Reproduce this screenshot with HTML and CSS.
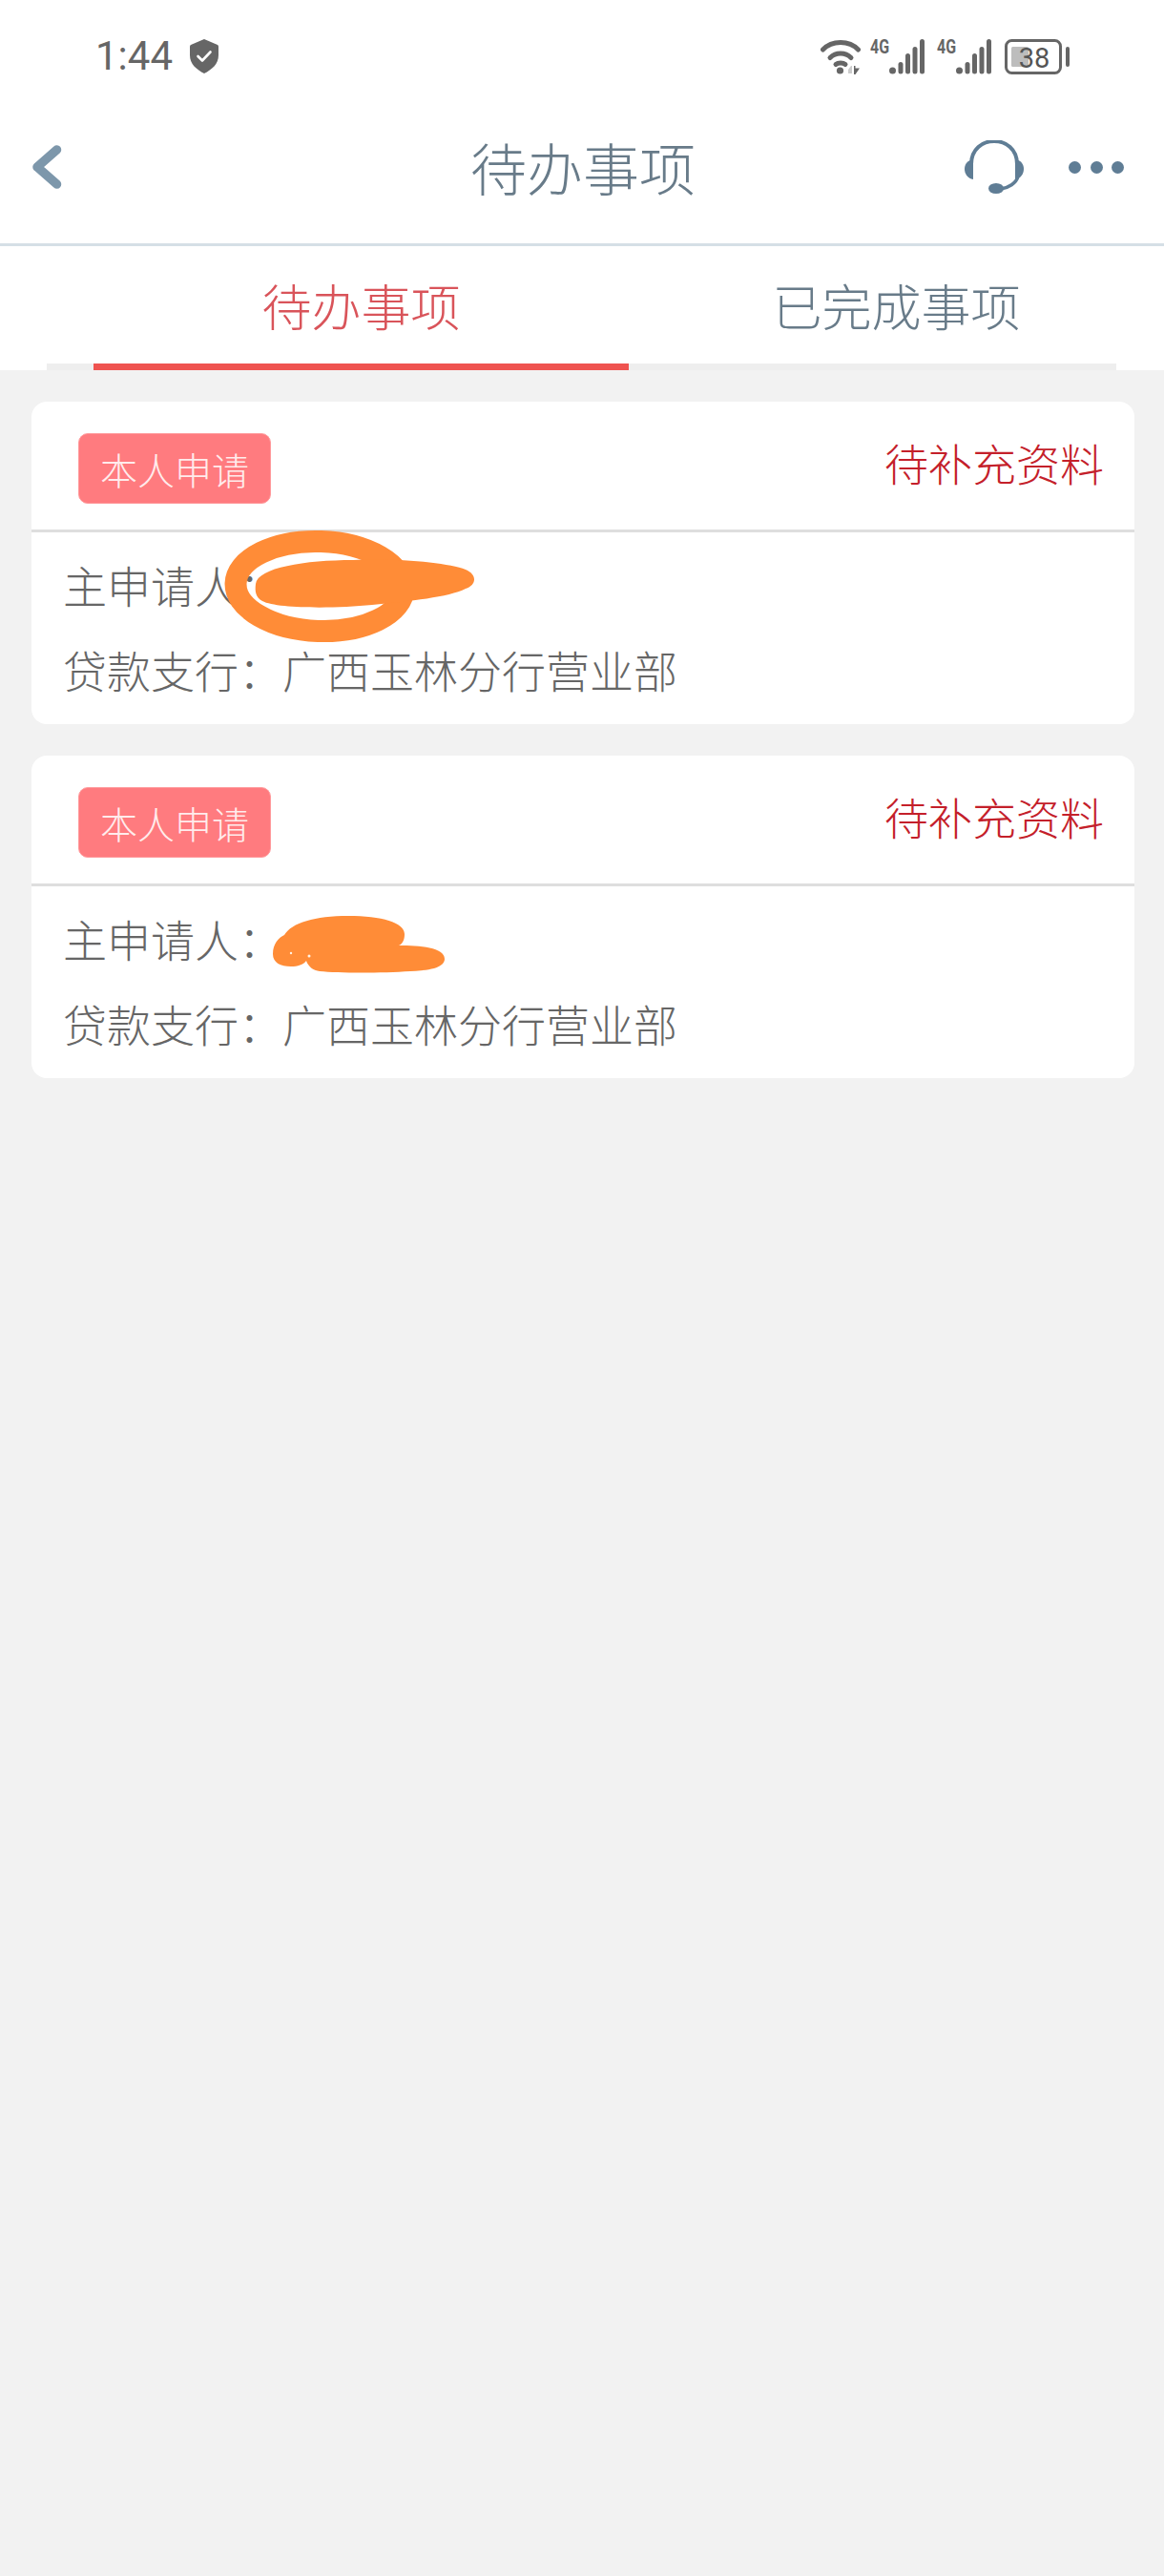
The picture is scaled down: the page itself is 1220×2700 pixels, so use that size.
FILE: index.html
```html
<!DOCTYPE html>
<html lang="zh-CN">
<head>
<meta charset="utf-8">
<title>待办事项</title>
<link rel="stylesheet" href="styles.css">
</head>
<body>
<div class="app">
  <header class="top">
    <div class="status">
      <span class="time">1:44</span>
      <svg class="shield" viewBox="0 0 30 36" width="30" height="36">
        <path fill="#666" d="M15 0 L29 6 Q30 6.500 30 8 L30 17 C30 26 23 32 15 36 C7 32 0 26 0 17 L0 8 Q0 6.500 1 6 Z"/>
        <path fill="none" stroke="#fff" stroke-width="2.600" stroke-linecap="round" stroke-linejoin="round" d="M8.500 18 L13 22.500 L21.500 13.500"/>
      </svg>
      <div class="sys">
        <svg class="wifi" viewBox="0 0 42 37" width="42" height="37">
          <g fill="none" stroke="#666" stroke-width="5" stroke-linecap="round">
            <path d="M2.500 11 C12 1 30 1 39.500 11"/>
            <path d="M10 19.500 C16 13.500 26 13.500 32 19.500"/>
            <path d="M16 26.500 C18.500 24.500 23.500 24.500 26 26.500"/>
          </g>
          <circle cx="20.500" cy="33" r="3.600" fill="#666"/>
          <path fill="#ccc" d="M29 36 L29 32 L32 28 L33 28 L33 36Z"/>
          <path fill="#666" d="M35 28 L36.500 28 L36.500 30.500 L41 30.500 L36.500 37 L35 37Z"/>
        </svg>
        <svg class="sig" viewBox="0 -8 58 45" width="58" height="45">
          <text class="net" x="0" y="15" textLength="20" lengthAdjust="spacingAndGlyphs">4G</text>
          <g fill="#666">
            <circle cx="23.500" cy="33" r="3.500"/>
            <rect x="29.500" y="24" width="5" height="12.500" rx="2.500"/>
            <rect x="37" y="15" width="5" height="21.500" rx="2.500"/>
            <rect x="44.500" y="8" width="5" height="28.500" rx="2.500"/>
            <rect x="52" y="0" width="5" height="36.500" rx="2.500"/>
          </g>
        </svg>
        <svg class="sig" viewBox="0 -8 58 45" width="58" height="45">
          <text class="net" x="0" y="15" textLength="20" lengthAdjust="spacingAndGlyphs">4G</text>
          <g fill="#666">
            <circle cx="23.500" cy="33" r="3.500"/>
            <rect x="29.500" y="24" width="5" height="12.500" rx="2.500"/>
            <rect x="37" y="15" width="5" height="21.500" rx="2.500"/>
            <rect x="44.500" y="8" width="5" height="28.500" rx="2.500"/>
            <rect x="52" y="0" width="5" height="36.500" rx="2.500"/>
          </g>
        </svg>
        <svg class="batt" viewBox="0 0 68 37" width="68" height="37">
          <rect x="1.500" y="1.500" width="57" height="34" rx="6" fill="none" stroke="#666" stroke-width="3"/>
          <rect x="7" y="8" width="18" height="21" rx="1.500" fill="#bdbdbd"/>
          <text class="pct" x="31" y="29.500" text-anchor="middle">38</text>
          <rect x="64" y="8" width="4" height="21" rx="2" fill="#666"/>
        </svg>
      </div>
    </div>
    <nav class="nav">
      <svg class="back" viewBox="0 0 32 46" width="32" height="46">
        <path fill="none" stroke="#7d97ab" stroke-width="9.500" stroke-linecap="round" stroke-linejoin="round" d="M26.500 5 L6 23 L26.500 41"/>
      </svg>
      <h1 class="title">待办事项</h1>
      <svg class="headset" viewBox="0 0 62 56" width="62" height="56">
        <path fill="none" stroke="#5f7d95" stroke-width="4" d="M7 25 C7 -7 55 -7 55 25"/>
        <path fill="none" stroke="#5f7d95" stroke-width="3.500" d="M56 38 C54 45 46 50 38 51"/>
        <path fill="#5f7d95" d="M9 20 L9 41 C3 40 0 35 0 30 C0 25 3 21 9 20Z"/>
        <path fill="#5f7d95" d="M53 20 L53 41 C59 40 62 35 62 30 C62 25 59 21 53 20Z"/>
        <ellipse cx="33" cy="50.500" rx="8" ry="5.500" fill="#5f7d95"/>
      </svg>
      <div class="more"><i class="dot"></i><i class="dot"></i><i class="dot"></i></div>
    </nav>
  </header>

  <section class="tabs">
    <div class="tab-row">
      <div class="tab tab-on">待办事项</div>
      <div class="tab">已完成事项</div>
    </div>
    <div class="track"><div class="ink"></div></div>
  </section>

  <main class="list">
    <article class="card">
      <div class="card-head">
        <span class="tag">本人申请</span>
        <span class="state">待补充资料</span>
      </div>
      <div class="card-body">
        <p class="row">主申请人：</p>
        <p class="row">贷款支行：广西玉林分行营业部</p>
      </div>
      <svg class="scrawl scrawl-a" viewBox="0 0 280 130" width="280" height="130">
        <ellipse cx="105" cy="64.500" rx="88" ry="47" transform="rotate(2 105 64.500)" fill="none" stroke="#ff8c37" stroke-width="23"/>
        <path fill="#ff8c37" d="M38 62 C40 45 90 37 140 37 C190 35 240 40 258 47 C270 52 270 63 258 67 C240 76 200 80 160 84 C120 88 60 88 45 80 C38 76 37 70 38 62Z"/>
      </svg>
    </article>

    <article class="card">
      <div class="card-head">
        <span class="tag">本人申请</span>
        <span class="state">待补充资料</span>
      </div>
      <div class="card-body">
        <p class="row">主申请人：</p>
        <p class="row">贷款支行：广西玉林分行营业部</p>
      </div>
      <svg class="scrawl scrawl-b" viewBox="0 0 192 70" width="192" height="70">
        <path fill="#ff8c37" d="M6 45 C6 34 12 28 18 25 C26 12 50 5 85 5 C120 5 144 12 144 24 C144 30 142 34 138 36 C160 36 186 38 186 50 C186 58 175 62 150 63 C120 65 75 65 55 63 C48 62 43 58 41 52 C38 56 32 58 25 58 C14 58 6 54 6 45Z"/>
        <circle class="speck" cx="25" cy="44" r="1.200"/>
        <circle class="speck" cx="44" cy="47" r="1.500"/>
      </svg>
    </article>
  </main>
</div>
</body>
</html>
```
FILE: styles.css
```css
* { box-sizing: border-box; }
html, body { margin: 0; padding: 0; }
body {
  background: #f2f2f2;
  font-family: "Noto Sans CJK SC", "Noto Sans", sans-serif;
  font-weight: 300;
}
.app { width: 1220px; min-height: 2700px; background: #f2f2f2; }

.top { background: #fff; border-bottom: 3px solid #d5dfe6; height: 258px; }

.status {
  height: 116px;
  display: flex;
  align-items: center;
  padding: 2px 99px 0 100px;
}
.time {
  font-family: Roboto, "Liberation Sans", sans-serif;
  font-size: 42px;
  font-weight: 400;
  line-height: 48px;
  color: #666;
}
.shield { margin-left: 18px; display: block; }
.sys { margin-left: auto; display: flex; align-items: flex-end; padding-bottom: 7px; }
.wifi { display: block; }
.sig { display: block; margin-left: 10px; }
.sig + .sig { margin-left: 12px; }
.batt { display: block; margin-left: 13px; }
.net {
  font-family: Roboto, "Liberation Sans", sans-serif;
  font-size: 20px;
  font-weight: 700;
  fill: #666;
}
.pct {
  font-family: Roboto, "Liberation Sans", sans-serif;
  font-size: 29px;
  font-weight: 400;
  fill: #555;
}

.nav {
  height: 118px;
  display: flex;
  align-items: center;
  padding: 0 42px 0 33px;
}
.back { display: block; }
.title {
  margin: 0 0 0 426px;
  width: 240px;
  font-size: 59px;
  font-weight: 300;
  line-height: 80px;
  text-align: center;
  color: #687b89;
  white-space: nowrap;
}
.headset { display: block; margin-left: auto; }
.more { display: flex; gap: 9.500px; margin-left: 47px; }
.dot { display: block; width: 13px; height: 13px; border-radius: 50%; background: #5f7d95; }

.tabs { background: #fff; height: 130px; }
.tab-row { display: flex; height: 123px; padding-left: 98px; }
.tab {
  flex: 1;
  font-size: 52px;
  font-weight: 300;
  line-height: 123px;
  text-align: center;
  color: #687b89;
}
.tab-on { color: #d9545a; }
.track { height: 7px; margin: 0 50px 0 49px; background: #eeeeee; }
.ink { height: 7px; width: 561px; margin-left: 49px; background: #ef5350; }

.list { padding: 33px 31px 0 33px; display: flex; flex-direction: column; gap: 33px; }
.card { position: relative; height: 338px; background: #fff; border-radius: 16px; }
.card-head {
  height: 137px;
  border-bottom: 3px solid #dedede;
  display: flex;
  justify-content: space-between;
  align-items: flex-start;
  padding: 33px 32px 0 49px;
}
.tag {
  width: 202px;
  height: 74px;
  display: flex;
  align-items: center;
  justify-content: center;
  background: #ff7b7f;
  border: 1px solid #ff9a9c;
  border-radius: 10px;
  color: #ffecec;
  font-size: 39px;
  font-weight: 300;
  line-height: 1;
}
.state {
  font-size: 46px;
  font-weight: 300;
  line-height: 60px;
  color: #c4202a;
}
.card-body { padding: 10px 33px 0; }
.row {
  margin: 0;
  font-size: 46px;
  font-weight: 300;
  line-height: 89px;
  color: #666;
  white-space: nowrap;
}

.scrawl { position: absolute; display: block; }
.scrawl-a { left: 197px; top: 129px; }
.scrawl-b { left: 247px; top: 163px; }
.speck { fill: #fff3e6; }
```
